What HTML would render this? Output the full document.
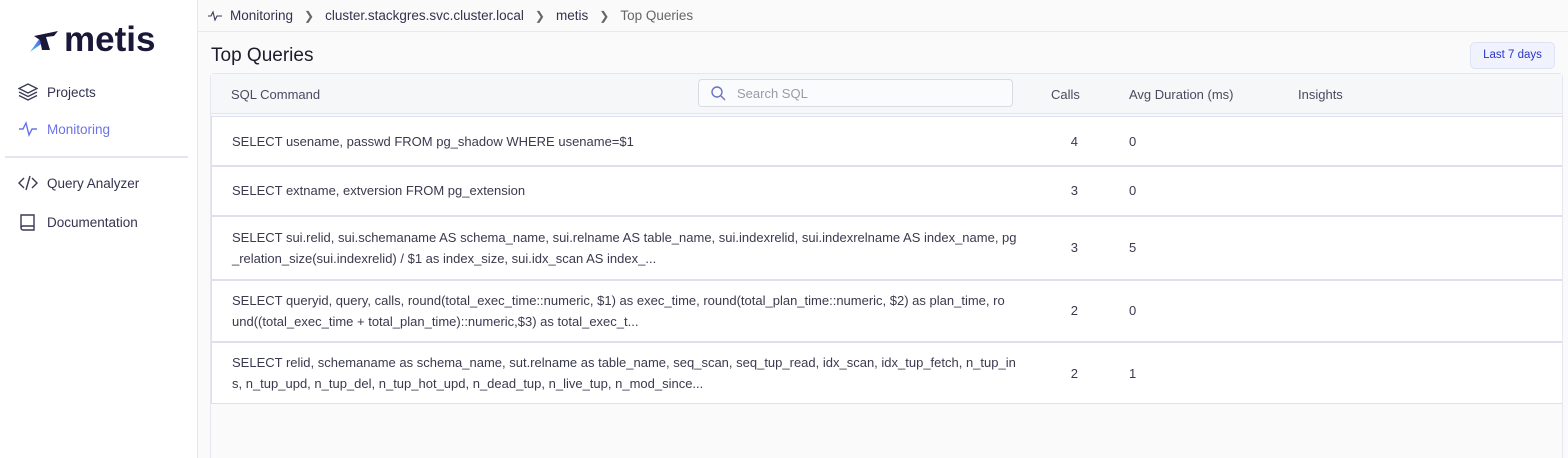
<!DOCTYPE html>
<html style="width:1568px;height:458px;overflow:hidden"><head><style>
*{box-sizing:border-box;margin:0;padding:0}
body{width:1568px;height:458px;overflow:hidden;font-family:"Liberation Sans",sans-serif;background:#fafafb;position:relative;color:#2f2f45}
.side{position:absolute;left:0;top:0;width:198px;height:458px;background:#fff;border-right:1px solid #e6e6ec}
.logo{position:absolute;left:28px;top:20px;font-size:35px;font-weight:bold;color:#1a1838}
.nav{position:absolute;left:18px;font-size:13.5px;color:#33334f;display:flex;align-items:center}
.nav svg{margin-right:9px}
.sep{position:absolute;left:5px;top:156px;width:183px;height:2px;background:#e5e5ee}
.crumb{position:absolute;left:198px;top:0;right:0;height:32px;border-bottom:1px solid #e8e8ee;font-size:13.5px;color:#33334f;display:flex;align-items:center;padding-left:10px}
.crumb .ch{color:#666;margin:0 11px;font-size:12px}
h1{position:absolute;left:211px;top:45px;font-size:19px;font-weight:normal;color:#1c1c2c}
.btn{position:absolute;left:1470px;top:42px;width:85px;height:27px;border:1px solid #dfe2f2;background:#f0f2fd;border-radius:5px;font-size:11.5px;color:#2b35c8;text-align:center;line-height:25px}
.tbl{position:absolute;left:210px;top:73px;width:1353px;height:390px;border:1px solid #e6e7ee;border-radius:4px;background:#fafafb}
.hdr{position:absolute;left:0;top:0;right:0;height:40px;background:#f6f7f9;border-bottom:1px solid #e4e4f0;font-size:13px;color:#4a4a5e}
.hdr span{position:absolute;top:13px}
.search{position:absolute;left:487px;top:5px;width:315px;height:28px;border:1px solid #d9dbe3;border-radius:4px;background:#fafbfc;color:#9a9aaa;font-size:13px;padding:6px 0 0 38px}
.row{position:absolute;left:0;right:0;background:#fff;border:1px solid #dedff2;border-right:none;font-size:13px;color:#3a3a4e;line-height:21px}
.row .q{position:absolute;left:20px;width:820px}
.row .c{position:absolute;left:850px;width:16px;text-align:right}
.row .d{position:absolute;left:917px}
</style></head><body>
<div class="side">
 <div class="logo"><svg width="34" height="26" viewBox="0 0 34 26" style="vertical-align:-3px;margin-right:2px"><defs><linearGradient id="g" x1="0" y1="1" x2="1" y2="0"><stop offset="0" stop-color="#3fd3e0"/><stop offset="1" stop-color="#5a3ef0"/></linearGradient></defs><path d="M2 24 L12 10 L16 14 Z" fill="url(#g)"/><path d="M6 8 L30 3 L26 8 L18 9 L22 22 L14 22 L12 12 Z" fill="#1a1838"/></svg>metis</div>
 <div class="nav" style="top:83px"><svg width="20" height="18" viewBox="0 0 20 18" fill="none" stroke="#3a3a55" stroke-width="1.3"><path d="M10 1L19 5.5 10 10 1 5.5Z"/><path d="M1 9l9 4.5 9-4.5"/><path d="M1 12.5l9 4.5 9-4.5"/></svg>Projects</div>
 <div class="nav" style="top:120px;color:#6c72e8"><svg width="20" height="18" viewBox="0 0 20 18" fill="none" stroke="#6c72e8" stroke-width="1.4"><path d="M1 9h4l3-6 3 12 3-6h5"/></svg>Monitoring</div>
 <div class="sep"></div>
 <div class="nav" style="top:174px"><svg width="20" height="18" viewBox="0 0 20 18" fill="none" stroke="#3a3a55" stroke-width="1.4"><path d="M6 4L1 9l5 5M14 4l5 5-5 5M12 2L8 16"/></svg>Query Analyzer</div>
 <div class="nav" style="top:212px"><svg width="20" height="20" viewBox="0 0 20 20" fill="none" stroke="#3a3a55" stroke-width="1.4"><path d="M3 3h13v15H5a2 2 0 0 1-2-2z"/><path d="M3 15.5a2 2 0 0 1 2-1.5h11"/></svg>Documentation</div>
</div>
<div class="crumb"><svg width="14" height="12" viewBox="0 0 14 12" fill="none" stroke="#3a3a55" stroke-width="1.1" style="margin-right:8px"><path d="M0 6h3l2-4 2 8 2-4h5"/></svg>Monitoring<span class="ch">❯</span>cluster.stackgres.svc.cluster.local<span class="ch">❯</span>metis<span class="ch">❯</span><span style="color:#666">Top Queries</span></div>
<h1>Top Queries</h1>
<div class="btn">Last 7 days</div>
<div class="tbl">
 <div class="hdr"><span style="left:20px">SQL Command</span>
  <div class="search"><svg width="16" height="16" viewBox="0 0 16 16" fill="none" stroke="#6c72c8" stroke-width="1.4" style="position:absolute;left:11px;top:5px"><circle cx="7" cy="7" r="5"/><path d="M11 11l4 4"/></svg>Search SQL</div>
  <span style="left:840px">Calls</span><span style="left:918px">Avg Duration (ms)</span><span style="left:1087px">Insights</span></div>
 <div class="row" style="top:42px;height:50px"><div class="q" style="top:14px">SELECT usename, passwd FROM pg_shadow WHERE usename=$1</div><div class="c" style="top:14px">4</div><div class="d" style="top:14px">0</div></div>
 <div class="row" style="top:92px;height:50px"><div class="q" style="top:13px">SELECT extname, extversion FROM pg_extension</div><div class="c" style="top:13px">3</div><div class="d" style="top:13px">0</div></div>
 <div class="row" style="top:142px;height:64px"><div class="q" style="top:10px">SELECT sui.relid, sui.schemaname AS schema_name, sui.relname AS table_name, sui.indexrelid, sui.indexrelname AS index_name, pg<br>_relation_size(sui.indexrelid) / $1 as index_size, sui.idx_scan AS index_...</div><div class="c" style="top:20px">3</div><div class="d" style="top:20px">5</div></div>
 <div class="row" style="top:206px;height:62px"><div class="q" style="top:9px">SELECT queryid, query, calls, round(total_exec_time::numeric, $1) as exec_time, round(total_plan_time::numeric, $2) as plan_time, ro<br>und((total_exec_time + total_plan_time)::numeric,$3) as total_exec_t...</div><div class="c" style="top:19px">2</div><div class="d" style="top:19px">0</div></div>
 <div class="row" style="top:268px;height:62px"><div class="q" style="top:9px">SELECT relid, schemaname as schema_name, sut.relname as table_name, seq_scan, seq_tup_read, idx_scan, idx_tup_fetch, n_tup_in<br>s, n_tup_upd, n_tup_del, n_tup_hot_upd, n_dead_tup, n_live_tup, n_mod_since...</div><div class="c" style="top:20px">2</div><div class="d" style="top:20px">1</div></div>
</div>
</body></html>
